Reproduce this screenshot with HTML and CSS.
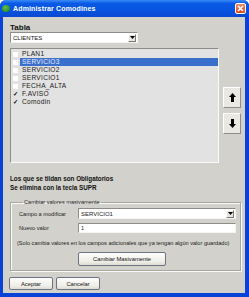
FILE: index.html
```html
<!DOCTYPE html>
<html lang="es">
<head>
    <meta charset="UTF-8">
    <title>Administrar Comodines</title>
    <link rel="stylesheet" href="styles.css">
</head>
<body>
    <div class="window">
        <div class="titlebar">
            <span class="app-icon"></span>
            <span class="title">Administrar Comodines</span>
            <span class="close">
                <svg width="7" height="7" viewBox="0 0 7 7"><path d="M1 1L6 6M6 1L1 6" stroke="#fff" stroke-width="1.6"/></svg>
            </span>
        </div>
        <div class="client">
            <div class="label-bold">Tabla</div>
            <div class="select select-table">
                <span>CLIENTES</span>
                <span class="drop"><svg width="5" height="3" viewBox="0 0 5 3"><path d="M0 0H5L2.5 3Z" fill="#000"/></svg></span>
            </div>

            <div class="list-row">
                <ul class="list">
                    <li><span class="check"></span><span class="item">PLAN1</span></li>
                    <li class="selected"><span class="check"></span><span class="item">SERVICIO3</span></li>
                    <li><span class="check"></span><span class="item">SERVICIO2</span></li>
                    <li><span class="check"></span><span class="item">SERVICIO1</span></li>
                    <li><span class="check"></span><span class="item">FECHA_ALTA</span></li>
                    <li><span class="check checked">✓</span><span class="item">F.AVISO</span></li>
                    <li><span class="check checked">✓</span><span class="item">Comodin</span></li>
                </ul>
                <div class="move-btns">
                    <button class="move">
                        <svg width="7" height="9" viewBox="0 0 7 9"><path d="M3.5 0L7 4H5V9H2V4H0Z" fill="#000"/></svg>
                    </button>
                    <button class="move">
                        <svg width="7" height="9" viewBox="0 0 7 9"><path d="M3.5 9L7 5H5V0H2V5H0Z" fill="#000"/></svg>
                    </button>
                </div>
            </div>

            <p class="hint">Los que se tildan son Obligatorios<br>Se elimina con la tecla SUPR</p>

            <fieldset class="group">
                <legend>Cambiar valores masivamente</legend>
                <div class="field">
                    <label>Campo a modificar</label>
                    <div class="select select-field">
                        <span>SERVICIO1</span>
                        <span class="drop"><svg width="5" height="3" viewBox="0 0 5 3"><path d="M0 0H5L2.5 3Z" fill="#000"/></svg></span>
                    </div>
                </div>
                <div class="field">
                    <label>Nuevo valor</label>
                    <div class="input">1</div>
                </div>
                <p class="note">(Solo cambia valores en los campos adicionales que ya tengan algún valor guardado)</p>
                <div class="mass-row">
                    <button class="btn mass">Cambiar Masivamente</button>
                </div>
            </fieldset>

            <div class="actions">
                <button class="btn">Aceptar</button>
                <button class="btn">Cancelar</button>
            </div>
        </div>
    </div>
</body>
</html>
```

FILE: styles.css
```css
/* General */
body {
    margin: 0;
    font-family: "Liberation Sans", Arial, sans-serif;
    color: #111;
}

.window {
    width: 249px;
    height: 297px;
    background: #0842d6;
    border-radius: 6px 6px 0 0;
    display: flex;
    flex-direction: column;
    overflow: hidden;
}

/* Title bar */
.titlebar {
    height: 17px;
    flex: none;
    display: flex;
    align-items: center;
    padding: 0 3px 0 2px;
    background: linear-gradient(#3b8cf5 0%, #0a5ae6 20%, #0753e0 60%, #0a48d2 100%);
}

.app-icon {
    width: 8px;
    height: 7px;
    border-radius: 50%;
    background: radial-gradient(circle at 40% 35%, #5fc04a, #1c7a1c);
    margin-top: -1px;
}

.title {
    margin-left: 3px;
    color: #fff;
    font-size: 7px;
    font-weight: bold;
    letter-spacing: 0.15px;
    flex: 1;
}

.close {
    width: 11px;
    height: 11px;
    box-sizing: border-box;
    border: 1px solid #fff;
    border-radius: 2px;
    background: linear-gradient(#f08a6a, #d9461c);
    display: flex;
    align-items: center;
    justify-content: center;
}

/* Client area */
.client {
    flex: 1;
    margin: 0 4px 4px 3px;
    background: #d2d1cb;
    padding: 6px 0 0 7px;
}

.label-bold {
    font-size: 8px;
    font-weight: bold;
    line-height: 9px;
}

.select {
    height: 11px;
    box-sizing: border-box;
    background: #fff;
    border: 1px solid #8d8c86;
    border-right-color: #f4f4f0;
    border-bottom-color: #f4f4f0;
    display: flex;
    align-items: center;
    font-size: 6px;
    padding-left: 2px;
}

.select span:first-child {
    flex: 1;
}

.select-table {
    width: 128px;
}

.drop {
    width: 8px;
    height: 8px;
    margin-right: 1px;
    box-sizing: border-box;
    background: #e6e5df;
    border: 1px solid #fff;
    border-right-color: #777;
    border-bottom-color: #777;
    display: flex;
    align-items: center;
    justify-content: center;
}

/* List */
.list-row {
    display: flex;
    margin-top: 5px;
}

.list {
    list-style: none;
    margin: 0;
    padding: 1px 0 0 1px;
    width: 209px;
    height: 115px;
    box-sizing: border-box;
    background: #e2e2e2;
    border: 1px solid #8e8d87;
    border-right-color: #fafafa;
    border-bottom-color: #fafafa;
    font-size: 6.6px;
    color: #1a1a1a;
}

.list li {
    height: 8px;
    display: flex;
    align-items: center;
}

.check {
    width: 5px;
    height: 5px;
    background: #fff;
    margin-left: 1px;
    margin-right: 2px;
    font-size: 6px;
    line-height: 5px;
    text-align: center;
    color: #000;
}

.check.checked {
    background: transparent;
    font-weight: bold;
}

.item {
    flex: 1;
    height: 8px;
    line-height: 8px;
    padding-left: 2px;
    letter-spacing: 0.3px;
}

.selected .item {
    background: #3a6fcb;
    color: #e8eefc;
}

.move-btns {
    display: flex;
    flex-direction: column;
    gap: 5px;
    padding: 39px 0 0 4px;
}

.move {
    width: 18px;
    height: 21px;
    padding: 0;
    background: #e9e8e3;
    border: 1px solid #fff;
    border-right-color: #8e8d87;
    border-bottom-color: #8e8d87;
    display: flex;
    align-items: center;
    justify-content: center;
}

/* Hint */
.hint {
    margin: 11px 0 0;
    font-size: 6.3px;
    font-weight: bold;
    line-height: 9px;
}

/* Group box */
.group {
    margin: 7px 5px 0 0;
    padding: 2px 4px 4px 8px;
    border: 1px solid #a7a69f;
    box-shadow: inset 1px 1px 0 #fafafa, 1px 1px 0 #fafafa;
    font-size: 5.6px;
    color: #222;
}

.group legend {
    padding: 0 1px;
    margin-left: 4px;
    line-height: 7px;
}

.field {
    display: flex;
    align-items: center;
    margin-bottom: 4px;
}

.field label {
    width: 59px;
}

.select-field {
    width: 158px;
}

.input {
    width: 158px;
    height: 10px;
    box-sizing: border-box;
    background: #fff;
    border: 1px solid #8d8c86;
    border-right-color: #f4f4f0;
    border-bottom-color: #f4f4f0;
    padding-left: 2px;
    line-height: 8px;
}

.note {
    margin: 7px 0 0 -2px;
    line-height: 7px;
    white-space: nowrap;
}

.mass-row {
    padding: 5px 0 0 59px;
}

/* Buttons */
.btn {
    font-family: "Liberation Sans", Arial, sans-serif;
    font-size: 5.8px;
    color: #111;
    height: 13px;
    padding: 0;
    border: 1px solid #6c7484;
    border-radius: 2px;
    background: linear-gradient(#fdfdfb, #efeee8 70%, #dedcd2);
}

.btn.mass {
    width: 88px;
    height: 14px;
}

.actions {
    display: flex;
    gap: 3px;
    margin: 6px 0 0 -1px;
}

.actions .btn {
    width: 44px;
}
```
